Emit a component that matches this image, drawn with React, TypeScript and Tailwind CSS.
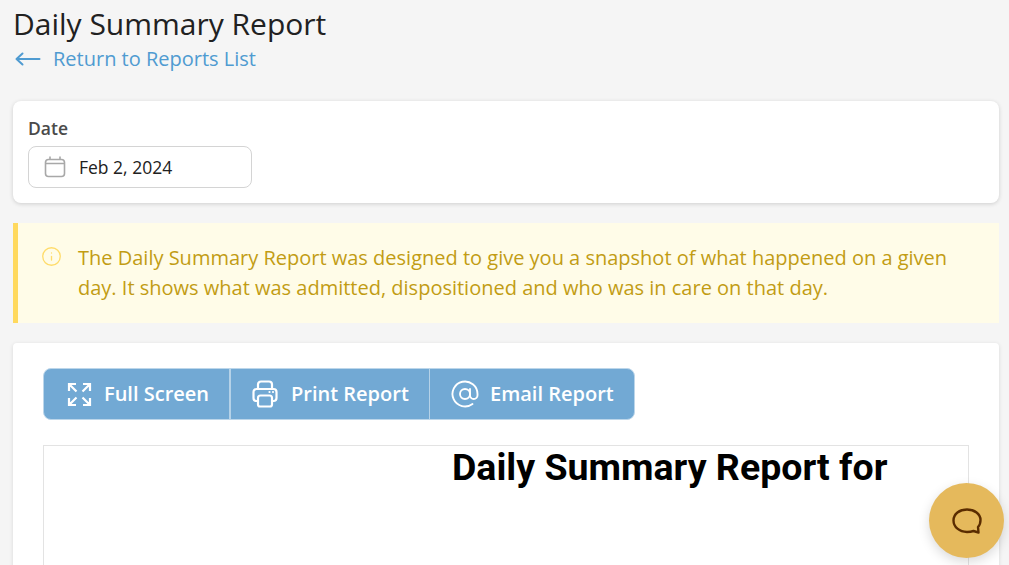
import { AtSign, Info } from 'lucide-react'

export default function App() {
    return (
        <div className="relative h-[565px] overflow-hidden bg-[#f5f5f5] pr-[10px] pl-[13px] font-['Open_Sans',sans-serif]">
            {/* Header */}
            <h1 className="pt-[3px] text-[30px] leading-[42px] text-[#212121]">Daily Summary Report</h1>
            <a className="flex h-[28px] items-center gap-[12px] pl-[2px] text-[20px] leading-[28px] text-[#4f9bd1]">
                <svg width="26" height="26" viewBox="0 0 26 26" fill="none" stroke="currentColor" strokeWidth="2" strokeLinecap="round" strokeLinejoin="round">
                    <path d="M1.500 13h23M7.500 7.500 1.500 13l6 5.500" />
                </svg>
                Return to Reports List
            </a>

            {/* Date filter */}
            <div className="mt-[28px] h-[102px] rounded-lg bg-white px-[15px] pt-[16px] shadow-[0_1px_4px_rgba(0,0,0,0.16)]">
                <label className="block text-[17.5px] leading-[22px] font-semibold text-[#4a4a4a]">Date</label>
                <div className="mt-[7px] flex h-[42px] w-[224px] items-center gap-[13px] rounded-lg border border-[#d4d4d4] bg-white pl-[15px]">
                    <svg width="22" height="22" viewBox="0 0 22 22" fill="none" stroke="#a8a8a8" strokeWidth="1.600">
                        <rect x="1.500" y="3.500" width="19" height="17" rx="3" />
                        <path d="M1.500 7.500h19M6 .500v3M16 .500v3" />
                    </svg>
                    <span className="text-[17.5px] text-[#212121]">Feb 2, 2024</span>
                </div>
            </div>

            {/* Notice */}
            <div className="mt-[20px] flex h-[100px] gap-[16px] border-l-[5px] border-[#ffd95e] bg-[#fffce8] pt-[20px] pl-[23px]">
                <Info className="mt-[3px] h-[21px] w-[21px] shrink-0 text-[#ffdc6b]" strokeWidth={1.5} />
                <p className="w-[880px] text-[20px] leading-[30px] text-[#c29c14]">
                    The Daily Summary Report was designed to give you a snapshot of what happened on a given day. It shows what was admitted, dispositioned and who was in care on that day.
                </p>
            </div>

            {/* Report */}
            <div className="mt-[20px] h-[300px] rounded-t-sm bg-white px-[30px] pt-[25px] shadow-[0_1px_4px_rgba(0,0,0,0.12)]">
                <div className="flex h-[52px] w-[592px] overflow-hidden rounded-lg border border-[#bcd6ea] bg-[#72a9d4] text-[20px] font-semibold text-white">
                    <button className="flex w-[187px] items-center gap-[12px] border-r-2 border-[#b5d2e8] pl-[23px]">
                        <svg width="25" height="25" viewBox="0 0 25 25" fill="none" stroke="currentColor" strokeWidth="2.200">
                            <path d="M2 9V2h7M2 2l7.500 7.500M16 2h7v7M23 2l-7.500 7.500M2 16v7h7M2 23l7.500-7.500M16 23h7v-7M23 23l-7.500-7.500" />
                        </svg>
                        Full Screen
                    </button>
                    <button className="flex w-[199px] items-center gap-[13px] border-r border-[#b5d2e8] pl-[21px]">
                        <svg width="26" height="28" viewBox="0 0 26 28" fill="none" stroke="currentColor" strokeWidth="2.200" strokeLinejoin="round">
                            <path d="M6 9V4.500A3 3 0 0 1 9 1.500h8a3 3 0 0 1 3 3V9" />
                            <path d="M6 21H4.500a3 3 0 0 1-3-3v-6a3 3 0 0 1 3-3h17a3 3 0 0 1 3 3v6a3 3 0 0 1-3 3H20" />
                            <path d="M6 18a2.500 2.500 0 0 1 2.500-2.500h9A2.500 2.500 0 0 1 20 18v6.500a2 2 0 0 1-2 2H8a2 2 0 0 1-2-2z" />
                            <path d="M17.500 12h.01M21 12h.01" strokeLinecap="round" />
                        </svg>
                        Print Report
                    </button>
                    <button className="flex flex-1 items-center gap-[10px] pl-[20px]">
                        <AtSign className="h-[30px] w-[30px]" strokeWidth={1.5} />
                        Email Report
                    </button>
                </div>
                <div className="mt-[25px] h-[200px] border border-[#e3e3e3] pl-[408px] font-['Roboto',sans-serif]">
                    <h2 className="text-[37.5px] leading-[42px] font-bold text-black">Daily Summary Report for</h2>
                </div>
            </div>

            {/* Chat */}
            <button className="absolute top-[483px] left-[929px] flex h-[75px] w-[75px] items-center justify-center rounded-full bg-[#e5b95c] shadow-[0_4px_12px_rgba(0,0,0,0.15)]">
                <svg width="30" height="26" viewBox="0 0 30 26" fill="none" stroke="#5a2c00" strokeWidth="2.400" strokeLinejoin="round">
                    <path d="M15 1.500C22.500 1.500 28.500 6 28.500 12c0 3-1 5.500-2.500 7l.5 5.500-5-1.500c-2 .7-4 1-6.500 1C7.500 24 1.500 19 1.500 12.500 1.500 6 7.500 1.500 15 1.500z" />
                </svg>
            </button>
        </div>
    )
}
